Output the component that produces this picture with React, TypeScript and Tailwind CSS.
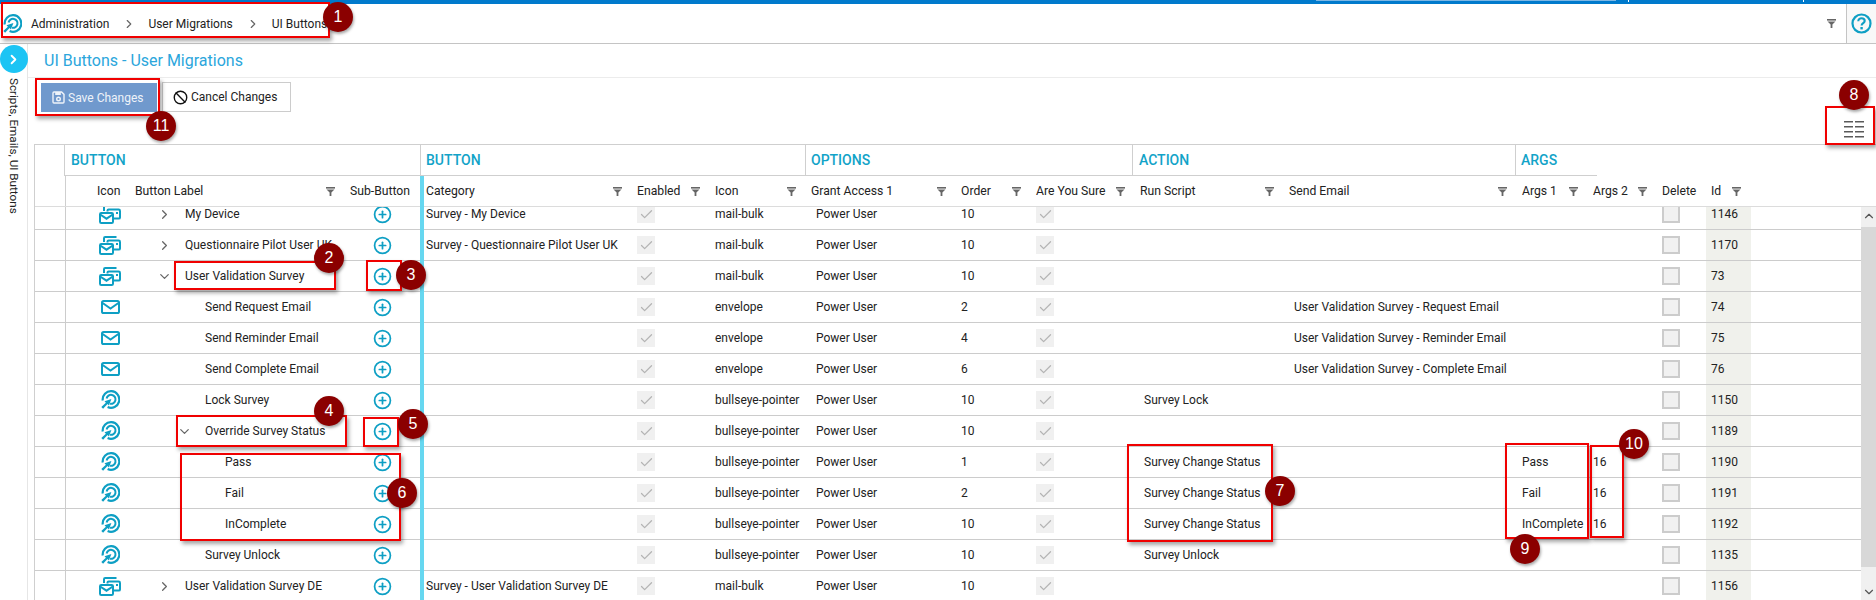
import React from "react";
import { ChevronRight, ChevronDown, ChevronUp, CirclePlus, Ban, Check } from "lucide-react";

const TEAL = "#0e9fc4";
const COLS = "grid grid-cols-[31px_64px_215px_76px_211px_78px_96px_150px_75px_104px_149px_233px_71px_69px_49px_45px]";

const MailBulk = () => (
  <svg width="22" height="19" viewBox="0 0 22 19" fill="none" stroke={TEAL} strokeWidth="2">
    <path d="M5 6V2.2C5 1.5 5.5 1 6.2 1H17.5" />
    <path d="M8.5 6.5V5.6C8.5 5 9 4.6 9.6 4.6H19.6C20.4 4.6 21 5.1 21 5.9V12.4C21 13.1 20.4 13.6 19.6 13.6H15" />
    <rect x="1" y="8" width="13" height="10" rx="1.3" />
    <path d="M1.2 9.5L7.5 13.7L13.8 9.5" />
    <rect x="17" y="7" width="2" height="2" fill={TEAL} stroke="none" />
  </svg>
);

const Envelope = () => (
  <svg width="19" height="14" viewBox="0 0 19 14" fill="none" stroke={TEAL} strokeWidth="2">
    <rect x="1" y="1" width="17" height="12" rx="1.6" />
    <path d="M1.6 3L9.5 8.6L17.4 3" />
  </svg>
);

const Bullseye = ({ size = 20 }: { size?: number }) => (
  <svg width={size} height={size} viewBox="0 0 20 20" fill="none" stroke={TEAL}>
    <path d="M2.75 10.5A8.3 8.3 0 1 1 7.6 17.07" strokeWidth="2.2" />
    <path d="M6.6 8.5A4.5 4.5 0 1 1 10 13.7" strokeWidth="2" />
    <path d="M11.4 8.9L8.9 15.6L7.5 14.1L3.1 18.8L1.3 17L5.9 12.7L4.5 11.2Z" fill={TEAL} stroke="none" />
  </svg>
);

const FilterIcon = () => (
  <svg width="9" height="9" viewBox="0 0 9 9" className="shrink-0" fill="#666">
    <rect x="0" y="0" width="9" height="1.6" />
    <path d="M0.5 2.4H8.5L5.4 5.6V9H3.6V5.6Z" />
  </svg>
);

const CheckBox = () => (
  <span className="flex h-[18px] w-[18px] items-center justify-center bg-[#f0f0f0]">
    <Check size={15} color="#b4b4b4" strokeWidth={2} />
  </span>
);

const DeleteBox = () => <span className="block h-[18px] w-[18px] border-2 border-[#cccccc] bg-[#f1f1f1]" />;

const Cell = ({ className = "", children }: { className?: string; children?: React.ReactNode }) => (
  <div className={`flex min-w-0 items-center whitespace-nowrap ${className}`}>{children}</div>
);

const H = ({ label, filter = true, className = "pl-[5px]" }: { label: string; filter?: boolean; className?: string }) => (
  <div className={`flex items-center justify-between pr-[10px] ${className}`}>
    <span className="whitespace-nowrap">{label}</span>
    {filter && <FilterIcon />}
  </div>
);

type Row = {
  icon: "bulk" | "env" | "eye";
  label: string;
  level: number;
  exp?: "r" | "d";
  cat?: string;
  order: number;
  run?: string;
  mail?: string;
  a1?: string;
  a2?: string;
  id: number;
};

const rows: Row[] = [
  { icon: "bulk", label: "My Device", level: 0, exp: "r", cat: "Survey - My Device", order: 10, id: 1146 },
  { icon: "bulk", label: "Questionnaire Pilot User UK", level: 0, exp: "r", cat: "Survey - Questionnaire Pilot User UK", order: 10, id: 1170 },
  { icon: "bulk", label: "User Validation Survey", level: 0, exp: "d", order: 10, id: 73 },
  { icon: "env", label: "Send Request Email", level: 1, order: 2, mail: "User Validation Survey - Request Email", id: 74 },
  { icon: "env", label: "Send Reminder Email", level: 1, order: 4, mail: "User Validation Survey - Reminder Email", id: 75 },
  { icon: "env", label: "Send Complete Email", level: 1, order: 6, mail: "User Validation Survey - Complete Email", id: 76 },
  { icon: "eye", label: "Lock Survey", level: 1, order: 10, run: "Survey Lock", id: 1150 },
  { icon: "eye", label: "Override Survey Status", level: 1, exp: "d", order: 10, id: 1189 },
  { icon: "eye", label: "Pass", level: 2, order: 1, run: "Survey Change Status", a1: "Pass", a2: "16", id: 1190 },
  { icon: "eye", label: "Fail", level: 2, order: 2, run: "Survey Change Status", a1: "Fail", a2: "16", id: 1191 },
  { icon: "eye", label: "InComplete", level: 2, order: 10, run: "Survey Change Status", a1: "InComplete", a2: "16", id: 1192 },
  { icon: "eye", label: "Survey Unlock", level: 1, order: 10, run: "Survey Unlock", id: 1135 },
  { icon: "bulk", label: "User Validation Survey DE", level: 0, exp: "r", cat: "Survey - User Validation Survey DE", order: 10, id: 1156 },
];

const iconName = { bulk: "mail-bulk", env: "envelope", eye: "bullseye-pointer" };

const DataRow = ({ r }: { r: Row }) => (
  <div className={`${COLS} h-[31px] border-b border-[#cccccc]`}>
    <div className="border-r border-[#cccccc]" />
    <Cell className="justify-end pr-[8px]">
      <span className="flex w-[24px] justify-center">
        {r.icon === "bulk" ? <MailBulk /> : r.icon === "env" ? <Envelope /> : <Bullseye />}
      </span>
    </Cell>
    <Cell>
      <span className={r.level === 0 ? "flex w-[55px] justify-end pr-[13px]" : r.level === 1 ? "flex w-[75px] justify-end pr-[13px]" : "w-[95px]"}>
        {r.exp === "r" && <ChevronRight size={15} color="#666" />}
        {r.exp === "d" && <ChevronDown size={15} color="#666" />}
      </span>
      {r.label}
    </Cell>
    <Cell className="justify-end pr-[29px]">
      <CirclePlus size={19} color={TEAL} strokeWidth={2.2} />
    </Cell>
    <Cell className="pl-[5px]">{r.cat}</Cell>
    <Cell className="pl-[5px]"><CheckBox /></Cell>
    <Cell className="pl-[5px]">{iconName[r.icon]}</Cell>
    <Cell className="pl-[10px]">Power User</Cell>
    <Cell className="pl-[5px]">{r.order}</Cell>
    <Cell className="pl-[5px]"><CheckBox /></Cell>
    <Cell className="pl-[9px]">{r.run}</Cell>
    <Cell className="pl-[10px]">{r.mail}</Cell>
    <Cell className="pl-[5px]">{r.a1}</Cell>
    <Cell className="pl-[5px]">{r.a2}</Cell>
    <Cell className="pl-[5px]"><DeleteBox /></Cell>
    <Cell className="bg-[#f0f1ec] pl-[5px]">{r.id}</Cell>
  </div>
);

const Box = ({ className }: { className: string }) => (
  <div className={`absolute border-2 border-[#f00000] shadow-[2px_3px_4px_rgba(0,0,0,0.35)] ${className}`} />
);

const Badge = ({ n, className }: { n: number; className: string }) => (
  <div className={`absolute flex h-[30px] w-[30px] items-center justify-center rounded-full bg-[#8b0000] text-[16px] text-white shadow-[1px_2px_3px_rgba(0,0,0,0.35)] font-['Liberation_Sans',sans-serif] ${className}`}>
    {n}
  </div>
);

export default function App() {
  return (
    <div className="relative flex h-[600px] w-[1876px] flex-col overflow-hidden bg-white text-[12px] text-[#222] font-['Roboto',sans-serif]">
      {/* window strip */}
      <div className="flex h-[4px] shrink-0 items-start bg-[#007acc]">
        <div className="ml-[1316px] h-[1px] w-[300px] bg-[#7db7e4]" />
        <div className="ml-[12px] h-[2px] w-[1px] bg-white" />
        <div className="ml-[174px] h-[2px] w-[1px] bg-white" />
      </div>

      {/* breadcrumb bar */}
      <div className="flex h-[40px] shrink-0 border-b border-[#c4c4c4]">
        <div className="flex flex-1 items-center border-r border-[#c4c4c4] pl-[2px] pr-[10px] text-[12px]">
          <Bullseye size={20} />
          <span className="ml-[9px]">Administration</span>
          <ChevronRight size={14} color="#666" className="ml-[13px] mr-[12px]" />
          <span>User Migrations</span>
          <ChevronRight size={14} color="#666" className="ml-[13px] mr-[12px]" />
          <span>UI Buttons</span>
          <div className="ml-auto flex flex-col items-center gap-[1px]">
            <FilterIcon />
          </div>
        </div>
        <div className="flex w-[29px] items-center justify-center bg-[#f8f8f8]">
          <svg width="21" height="21" viewBox="0 0 21 21" fill="none" stroke={TEAL}>
            <circle cx="10.5" cy="10.5" r="9" strokeWidth="2.2" />
            <path d="M7.3 8.2C7.3 6.4 8.8 5.3 10.5 5.3C12.3 5.3 13.7 6.4 13.7 8C13.7 10 10.6 10.2 10.6 12.4" strokeWidth="2.1" />
            <rect x="9.4" y="14" width="2.4" height="2.4" fill={TEAL} stroke="none" />
          </svg>
        </div>
      </div>

      <div className="flex min-h-0 flex-1">
        {/* left rail */}
        <div className="flex w-[28px] shrink-0 flex-col items-center border-r border-[#e6e6e6]">
          <div className="mt-[1px] flex h-[28px] w-[28px] items-center justify-center rounded-full bg-[#1cc4f4]">
            <ChevronRight size={15} color="#fff" strokeWidth={3} />
          </div>
          <div className="mt-[5px] whitespace-nowrap text-[11.7px] [writing-mode:vertical-rl]">Scripts, Emails, UI Buttons</div>
        </div>

        <div className="flex min-h-0 min-w-0 flex-1 flex-col">
          <div className="flex h-[34px] shrink-0 items-center border-b border-[#ececec] pl-[16px] text-[16px] text-[#2ba6dc]">
            UI Buttons - User Migrations
          </div>

          {/* toolbar */}
          <div className="flex h-[66px] shrink-0 items-start pl-[13px]">
            <button className="mt-[5px] flex h-[29px] w-[116px] items-center gap-[3px] bg-[#7099cd] pl-[11px] text-[12px] text-[#eef3f9]">
              <svg width="13" height="13" viewBox="0 0 13 13" fill="none" stroke="#eef3f9" strokeWidth="1.4">
                <path d="M1 2C1 1.4 1.4 1 2 1H9.6L12 3.4V11C12 11.6 11.6 12 11 12H2C1.4 12 1 11.6 1 11Z" />
                <rect x="3.2" y="1" width="5.6" height="3" fill="#eef3f9" stroke="none" />
                <circle cx="6.5" cy="8" r="1.8" />
              </svg>
              Save Changes
            </button>
            <button className="ml-[5px] mt-[4px] flex h-[30px] w-[129px] items-center gap-[3px] border border-[#cccccc] bg-white pl-[10px] text-[12px]">
              <Ban size={15} color="#111" strokeWidth={2.2} />
              Cancel Changes
            </button>
            <svg width="20" height="17" viewBox="0 0 20 17" fill="#5a5a5a" className="ml-auto mr-[12px] mt-[43px]">
              <rect x="0" y="0" width="9" height="1.5" />
              <rect x="11" y="0" width="9" height="1.5" />
              <rect x="0" y="5" width="9" height="1.5" />
              <rect x="11" y="5" width="9" height="1.5" />
              <rect x="0" y="10" width="9" height="1.5" />
              <rect x="11" y="10" width="9" height="1.5" />
              <rect x="0" y="15" width="9" height="1.5" />
              <rect x="11" y="15" width="9" height="1.5" />
            </svg>
          </div>

          {/* grid */}
          <div className="relative ml-[6px] flex min-h-0 flex-1 flex-col border-l border-t border-[#cfcfcf]">
            <div className="absolute bottom-0 left-[385px] top-[31px] w-[4px] bg-[#66d7f0]" />
            {/* group headers */}
            <div className="flex h-[31px] shrink-0 text-[14px] font-medium text-[#12a3c8]">
              <div className="w-[30px] border-r border-[#cfcfcf]" />
              <div className="flex w-[355px] items-center border-b border-[#cfcfcf] pl-[6px]">BUTTON</div>
              <div className="flex w-[385px] items-center border-b border-l border-[#cfcfcf] pl-[5px]">BUTTON</div>
              <div className="flex w-[327px] items-center border-b border-l border-[#cfcfcf] pl-[5px]">OPTIONS</div>
              <div className="flex w-[383px] items-center border-b border-l border-[#cfcfcf] pl-[6px]">ACTION</div>
              <div className="flex w-[82px] items-center border-b border-l border-[#cfcfcf] pl-[5px]">ARGS</div>
            </div>
            {/* column headers */}
            <div className={`${COLS} h-[31px] shrink-0 border-b border-[#dcdcdc] text-[12.2px]`}>
              <div className="border-r border-[#cfcfcf]" />
              <H label="Icon" filter={false} className="pl-[31px]" />
              <H label="Button Label" />
              <H label="Sub-Button" filter={false} className="pl-[5px] !pr-0" />
              <H label="Category" />
              <H label="Enabled" />
              <H label="Icon" />
              <H label="Grant Access 1" />
              <H label="Order" />
              <H label="Are You Sure" />
              <H label="Run Script" />
              <H label="Send Email" />
              <H label="Args 1" />
              <H label="Args 2" />
              <H label="Delete" filter={false} />
              <H label="Id" />
            </div>
            {/* body */}
            <div className="flex min-h-0 flex-1 overflow-hidden">
              <div className="-mt-[8px] w-[1826px] shrink-0">
                {rows.map((r) => (
                  <DataRow key={r.id} r={r} />
                ))}
              </div>
              <div className="flex w-[15px] shrink-0 flex-col items-center bg-[#f0f0f0]">
                <ChevronUp size={14} color="#555" className="mt-[2px]" />
                <div className="mt-[4px] h-[340px] w-full bg-[#d8d8d8]" />
                <ChevronDown size={14} color="#555" className="mt-[18px]" />
              </div>
            </div>
          </div>
        </div>
      </div>

      {/* annotations */}
      <Box className="left-[1px] top-[2px] h-[36px] w-[329px]" />
      <Badge n={1} className="left-[323px] top-[2px]" />
      <Box className="left-[35px] top-[78px] h-[38px] w-[125px]" />
      <Badge n={11} className="left-[146px] top-[111px]" />
      <Box className="left-[1825px] top-[106px] h-[39px] w-[50px]" />
      <Badge n={8} className="left-[1839px] top-[80px]" />
      <Box className="left-[174px] top-[261px] h-[29px] w-[162px]" />
      <Badge n={2} className="left-[314px] top-[243px]" />
      <Box className="left-[366px] top-[260px] h-[31px] w-[36px]" />
      <Badge n={3} className="left-[396px] top-[260px]" />
      <Box className="left-[176px] top-[415px] h-[32px] w-[171px]" />
      <Badge n={4} className="left-[314px] top-[396px]" />
      <Box className="left-[363px] top-[417px] h-[30px] w-[36px]" />
      <Badge n={5} className="left-[398px] top-[409px]" />
      <Box className="left-[180px] top-[453px] h-[88px] w-[221px]" />
      <Badge n={6} className="left-[387px] top-[478px]" />
      <Box className="left-[1127px] top-[444px] h-[98px] w-[146px]" />
      <Badge n={7} className="left-[1265px] top-[476px]" />
      <Box className="left-[1505px] top-[443px] h-[96px] w-[84px]" />
      <Badge n={9} className="left-[1510px] top-[534px]" />
      <Box className="left-[1590px] top-[445px] h-[93px] w-[34px]" />
      <Badge n={10} className="left-[1619px] top-[429px]" />
    </div>
  );
}
